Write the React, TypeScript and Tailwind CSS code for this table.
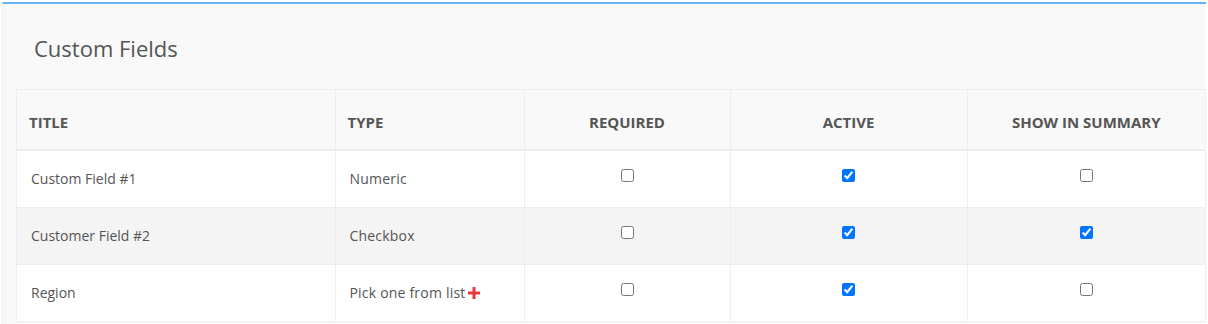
import React from 'react';

const rows = [
  { title: 'Custom Field #1', type: 'Numeric', required: false, active: true, summary: false, plus: false },
  { title: 'Customer Field #2', type: 'Checkbox', required: false, active: true, summary: true, plus: false },
  { title: 'Region', type: 'Pick one from list', required: false, active: true, summary: false, plus: true },
];

function Box({ checked }: { checked: boolean }) {
  return <input type="checkbox" checked={checked} readOnly className="m-0 h-[13px] w-[13px] align-middle" />;
}

export default function App() {
  return (
    <div className="h-[324px] w-[1208px] bg-white pl-[2px] pt-[2px] font-['Open_Sans',sans-serif] text-[#555]">
      <div className="w-[1204px] border-t-2 border-l border-[#eeeeee] border-t-[#62b2f4] bg-[#f9f9f9] pb-[3px]">
        {/* Heading */}
        <div className="flex h-[85px] items-center pl-[31px] pt-[3px]">
          <h2 className="text-[22px] font-normal text-[#555]">Custom Fields</h2>
        </div>

        {/* Table */}
        <div className="ml-[13px] w-[1190px] border border-[#eeeeee]">
          <table className="w-full border-collapse text-[14px]">
            <thead>
              <tr className="h-[60px] bg-[#f9f9f9] text-[15px] font-bold uppercase text-[#555]">
                <th className="w-[318px] border-b-2 border-r border-[#eeeeee] pl-[12px] pt-[6px] text-left font-bold">Title</th>
                <th className="w-[189px] border-b-2 border-r border-[#eeeeee] pl-[12px] pt-[6px] text-left font-bold">Type</th>
                <th className="w-[206px] border-b-2 border-r border-[#eeeeee] pt-[6px] text-center font-bold">Required</th>
                <th className="w-[237px] border-b-2 border-r border-[#eeeeee] pt-[6px] text-center font-bold">Active</th>
                <th className="border-b-2 border-[#eeeeee] pt-[6px] text-center font-bold">Show in Summary</th>
              </tr>
            </thead>
            <tbody>
              {rows.map((r, i) => (
                <tr key={r.title} className={`h-[57px] ${i === 1 ? 'bg-[#f4f4f4]' : 'bg-white'} ${i < 2 ? 'border-b border-[#eeeeee]' : ''}`}>
                  <td className="border-r border-[#eeeeee] pl-[14px]">{r.title}</td>
                  <td className="border-r border-[#eeeeee] pl-[14px]">
                    <span className="inline-flex items-center gap-[3px] tracking-[0.2px]">
                      {r.type}
                      {r.plus && (
                        <svg width="12" height="12" viewBox="0 0 12 12">
                          <path d="M4.5 0h3v4.5H12v3H7.5V12h-3V7.5H0v-3h4.5z" fill="#e8383d" />
                        </svg>
                      )}
                    </span>
                  </td>
                  <td className="border-r border-[#eeeeee] pb-[10px] text-center"><Box checked={r.required} /></td>
                  <td className="border-r border-[#eeeeee] pb-[10px] text-center"><Box checked={r.active} /></td>
                  <td className="pb-[10px] text-center"><Box checked={r.summary} /></td>
                </tr>
              ))}
            </tbody>
          </table>
        </div>
      </div>
    </div>
  );
}
